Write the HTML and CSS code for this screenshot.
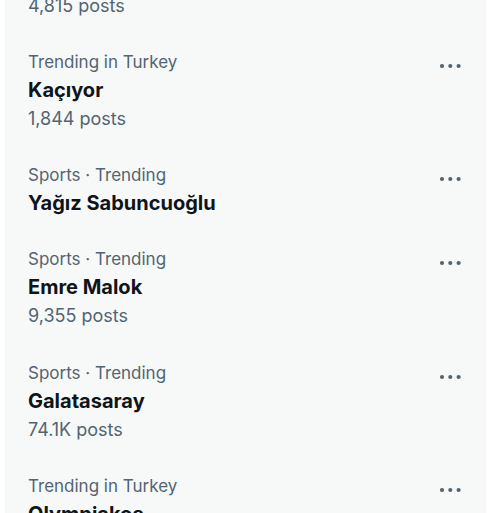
FILE: index.html
```html
<!DOCTYPE html>
<html lang="tr">
<head>
<meta charset="utf-8">
<link rel="stylesheet" href="styles.css">
</head>
<body>
<div class="panel">
  <div class="trend trend-partial">
    <div class="lines">
      <div class="posts">4,815 posts</div>
    </div>
  </div>
  <div class="trend">
    <div class="lines">
      <div class="meta">Trending in Turkey</div>
      <div class="name">Kaçıyor</div>
      <div class="posts">1,844 posts</div>
    </div>
    <svg class="more" viewBox="0 0 22 8" width="22" height="8"><circle cx="3" cy="4" r="2.1"/><circle cx="11.3" cy="4" r="2.1"/><circle cx="19.6" cy="4" r="2.1"/></svg>
  </div>
  <div class="trend">
    <div class="lines">
      <div class="meta">Sports · Trending</div>
      <div class="name">Yağız Sabuncuoğlu</div>
    </div>
    <svg class="more" viewBox="0 0 22 8" width="22" height="8"><circle cx="3" cy="4" r="2.1"/><circle cx="11.3" cy="4" r="2.1"/><circle cx="19.6" cy="4" r="2.1"/></svg>
  </div>
  <div class="trend">
    <div class="lines">
      <div class="meta">Sports · Trending</div>
      <div class="name">Emre Malok</div>
      <div class="posts">9,355 posts</div>
    </div>
    <svg class="more" viewBox="0 0 22 8" width="22" height="8"><circle cx="3" cy="4" r="2.1"/><circle cx="11.3" cy="4" r="2.1"/><circle cx="19.6" cy="4" r="2.1"/></svg>
  </div>
  <div class="trend">
    <div class="lines">
      <div class="meta">Sports · Trending</div>
      <div class="name">Galatasaray</div>
      <div class="posts">74.1K posts</div>
    </div>
    <svg class="more" viewBox="0 0 22 8" width="22" height="8"><circle cx="3" cy="4" r="2.1"/><circle cx="11.3" cy="4" r="2.1"/><circle cx="19.6" cy="4" r="2.1"/></svg>
  </div>
  <div class="trend">
    <div class="lines">
      <div class="meta">Trending in Turkey</div>
      <div class="name">Olympiakos</div>
      <div class="posts">12.3K posts</div>
    </div>
    <svg class="more" viewBox="0 0 22 8" width="22" height="8"><circle cx="3" cy="4" r="2.1"/><circle cx="11.3" cy="4" r="2.1"/><circle cx="19.6" cy="4" r="2.1"/></svg>
  </div>
</div>
</body>
</html>
```
FILE: styles.css
```css
html, body {
  margin: 0;
  padding: 0;
  background: #ffffff;
  overflow: hidden;
}
body {
  font-family: Inter, "Noto Sans", sans-serif;
  -webkit-font-smoothing: antialiased;
}
.panel {
  margin: -9px 0 0 5px;
  width: 481px;
  background: #f7f9f9;
}
.trend {
  display: flex;
  align-items: flex-start;
  justify-content: space-between;
  padding: 14px 25px 14px 23px;
}
.trend-partial {
  padding-top: 0;
  padding-bottom: 13px;
}
.lines {
  display: flex;
  flex-direction: column;
}
.meta {
  font-size: 17px;
  line-height: 28px;
  color: #536471;
}
.name {
  font-size: 20px;
  line-height: 28px;
  font-weight: 700;
  color: #0f1419;
}
.posts {
  font-size: 18px;
  line-height: 29.5px;
  color: #536471;
}
.more {
  fill: #536471;
  margin-top: 14px;
  flex-shrink: 0;
}
```
